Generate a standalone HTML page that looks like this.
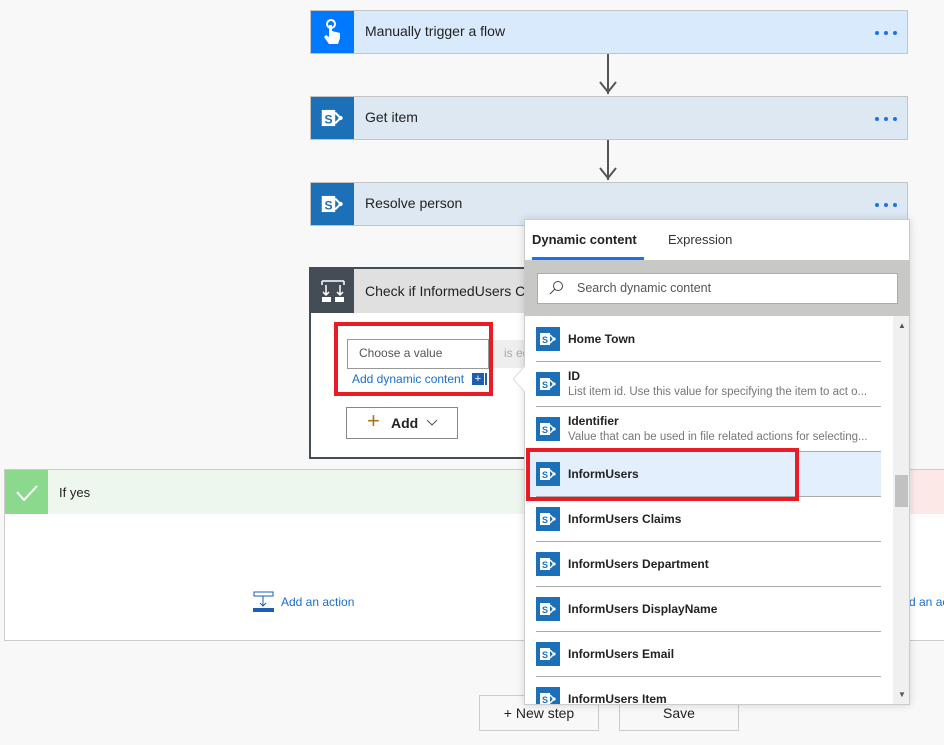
<!DOCTYPE html>
<html><head><style>
body{margin:0;width:944px;height:745px;background:#f8f8f8;font-family:"Segoe UI","Liberation Sans",sans-serif;position:relative;overflow:hidden;color:#222}
.a{position:absolute;white-space:nowrap}
.card{position:absolute;left:310px;width:596px;height:42px;border:1px solid #c4c4c4;font-size:14px}
.card .ic{position:absolute;left:0;top:0;width:43px;height:42px}
.card .t{position:absolute;left:54px;top:12px}
.dots{position:absolute;right:10px;top:20px;width:22px;height:4px}
.dots i{position:absolute;top:0;width:4px;height:4px;border-radius:2px;background:#1a73e8}
.arrow{position:absolute;left:607px;width:2px;background:#555}
.sp{position:absolute;left:536px;width:24px;height:24px;background:#1c70b8}
.row{position:absolute;left:568px;font-size:12px;font-weight:bold;color:#222;white-space:nowrap}
.desc{position:absolute;left:568px;font-size:11.5px;color:#777;white-space:nowrap}
.sep{position:absolute;left:536px;width:345px;height:1px;background:#aaa}
</style></head><body>
<svg width="0" height="0" style="position:absolute"><defs>
<g id="sp"><rect x="4" y="6" width="10" height="12" fill="#fff"/><text x="9" y="16" font-size="9" font-weight="bold" text-anchor="middle" fill="#1c70b8" font-family="Liberation Sans">S</text><path d="M14 8 L18 12 L14 16" stroke="#fff" stroke-width="1.5" fill="none"/><circle cx="18" cy="12" r="1.6" fill="#fff"/></g>
</defs></svg>

<div class="card" style="top:10px;background:#d9eafd"><div class="ic" style="background:#0078ff"><svg width="43" height="42"><circle cx="20" cy="13" r="4" stroke="#fff" stroke-width="2" fill="none"/><path d="M18 14 v12 l-3 -2 l-2 2 l5 7 h9 l2 -6 v-5 l-8 -2 v-6z" fill="#fff"/></svg></div><div class="t">Manually trigger a flow</div><div class="dots"><i style="left:0"></i><i style="left:9px"></i><i style="left:18px"></i></div></div>
<div class="arrow" style="top:54px;height:40px"></div><svg class="a" style="left:598px;top:80px" width="20" height="16"><path d="M2 2 L10 12 L18 2" stroke="#555" stroke-width="2" fill="none"/></svg>
<div class="card" style="top:96px;background:#dde8f3"><div class="ic" style="background:#1c70b8"><svg width="43" height="42" viewBox="-4 -3 32 30"><use href="#sp"/></svg></div><div class="t">Get item</div><div class="dots"><i style="left:0"></i><i style="left:9px"></i><i style="left:18px"></i></div></div>
<div class="arrow" style="top:140px;height:40px"></div><svg class="a" style="left:598px;top:166px" width="20" height="16"><path d="M2 2 L10 12 L18 2" stroke="#555" stroke-width="2" fill="none"/></svg>
<div class="card" style="top:182px;background:#dde8f3"><div class="ic" style="background:#1c70b8"><svg width="43" height="42" viewBox="-4 -3 32 30"><use href="#sp"/></svg></div><div class="t">Resolve person</div><div class="dots"><i style="left:0"></i><i style="left:9px"></i><i style="left:18px"></i></div></div>

<!-- condition -->
<div class="a" style="left:309px;top:267px;width:590px;height:188px;border:2px solid #444c56;background:#fff"></div>
<div class="a" style="left:311px;top:269px;width:43px;height:44px;background:#444c56"><svg width="43" height="44"><path d="M11 12h22M11 12v4M33 12v4M15 16v10M29 16v10M12 23l3 3 3-3M26 23l3 3 3-3" stroke="#fff" stroke-width="1.5" fill="none"/><rect x="11" y="28" width="9" height="5" fill="#fff"/><rect x="24" y="28" width="9" height="5" fill="#fff"/></svg></div>
<div class="a" style="left:354px;top:269px;width:546px;height:44px;background:#e0e0e0"></div>
<div class="a" style="left:365px;top:283px;font-size:14px">Check if InformedUsers Co</div>
<div class="a" style="left:347px;top:339px;width:140px;height:28px;border:1px solid #999;background:#fff;font-size:12px;color:#555"><span style="position:absolute;left:11px;top:6px">Choose a value</span></div>
<div class="a" style="left:489px;top:340px;width:40px;height:28px;background:#eee;font-size:12px;color:#aaa;overflow:hidden"><span style="position:absolute;left:15px;top:6px">is eq</span></div>
<div class="a" style="left:352px;top:372px;font-size:12px;color:#1a6ec8">Add dynamic content</div>
<div class="a" style="left:472px;top:373px;width:12px;height:12px;background:#1c5fb0;color:#fff;font-size:11px;line-height:12px;text-align:center">+</div>
<div class="a" style="left:485px;top:373px;width:2px;height:12px;background:#1c5fb0"></div>
<div class="a" style="left:334px;top:322px;width:151px;height:66px;border:4px solid #e81c24"></div>
<div class="a" style="left:346px;top:407px;width:110px;height:30px;border:1px solid #888;background:#fff;font-size:14px;font-weight:bold"><span style="position:absolute;left:20px;top:0px;font-weight:normal;font-size:22px;color:#b07020">+</span><span style="position:absolute;left:44px;top:7px">Add</span><svg class="a" style="left:79px;top:11px" width="12" height="8"><path d="M1 1l5 5 5-5" stroke="#555" fill="none"/></svg></div>

<!-- if yes -->
<div class="a" style="left:4px;top:469px;width:940px;height:170px;border:1px solid #ccc;background:#fff"></div>
<div class="a" style="left:5px;top:470px;width:43px;height:44px;background:#8ad98c"><svg width="43" height="44"><path d="M12 22l7 8 13-14" stroke="#fff" stroke-width="2" fill="none"/></svg></div>
<div class="a" style="left:48px;top:470px;width:880px;height:44px;background:#eef7ee"></div>
<div class="a" style="left:59px;top:485px;font-size:13px">If yes</div>
<div class="a" style="left:911px;top:470px;width:33px;height:44px;background:#fde8e8"></div>
<svg class="a" style="left:252px;top:591px" width="24" height="22"><rect x="2" y="1" width="19" height="4" fill="none" stroke="#1c5fb0"/><path d="M11 5v10M8 12l3 3 3-3" stroke="#1c5fb0" fill="none"/><rect x="1" y="17" width="21" height="4" fill="#1c5fb0"/></svg>
<div class="a" style="left:281px;top:595px;font-size:12px;color:#1a6ec8">Add an action</div>
<div class="a" style="left:909px;top:595px;font-size:12px;color:#1a6ec8">d an ac</div>

<div class="a" style="left:479px;top:695px;width:118px;height:34px;border:1px solid #ccc;background:#f8f8f8;font-size:14px;text-align:center;line-height:34px">+ New step</div>
<div class="a" style="left:619px;top:695px;width:118px;height:34px;border:1px solid #ccc;background:#f8f8f8;font-size:14px;text-align:center;line-height:34px">Save</div>

<!-- panel -->
<div class="a" style="left:524px;top:219px;width:386px;height:486px;background:#fff;border:1px solid #ccc;box-sizing:border-box;box-shadow:0 0 8px rgba(0,0,0,.15)"></div>
<svg class="a" style="left:512px;top:366px" width="14" height="26"><path d="M13 0 L1 13 L13 26" fill="#fff" stroke="#ddd"/></svg>
<div class="a" style="left:532px;top:232px;font-size:13px;color:#222;font-weight:600">Dynamic content</div>
<div class="a" style="left:532px;top:257px;width:112px;height:3px;background:#1a73e8"></div>
<div class="a" style="left:668px;top:232px;font-size:13px;color:#333">Expression</div>
<div class="a" style="left:524px;top:260px;width:386px;height:56px;background:#c8c8c6"></div>
<div class="a" style="left:537px;top:273px;width:359px;height:29px;background:#fff;border:1px solid #aaa;font-size:12.5px;color:#555"><svg class="a" style="left:10px;top:6px" width="16" height="16"><circle cx="10" cy="6" r="4.5" stroke="#444" fill="none"/><path d="M7 9L2 14" stroke="#444"/></svg><span style="position:absolute;left:39px;top:7px">Search dynamic content</span></div>
<div class="a" style="left:893px;top:316px;width:16px;height:388px;background:#f0f0f0"></div>
<div class="a" style="left:895px;top:475px;width:13px;height:32px;background:#c1c1c1"></div>
<div class="a" style="left:898px;top:321px;font-size:8px;color:#555">▲</div>
<div class="a" style="left:898px;top:690px;font-size:8px;color:#555">▼</div>
<div class="a" style="left:526px;top:452px;width:355px;height:44px;background:#e3effd"></div>
<div class="sep" style="top:361px"></div><div class="sep" style="top:406px"></div><div class="sep" style="top:451px"></div><div class="sep" style="top:496px"></div><div class="sep" style="top:541px"></div><div class="sep" style="top:586px"></div><div class="sep" style="top:631px"></div><div class="sep" style="top:676px"></div>
<svg class="sp" style="top:327px" viewBox="0 0 24 24"><use href="#sp"/></svg><div class="row" style="top:332px">Home Town</div>
<svg class="sp" style="top:372px" viewBox="0 0 24 24"><use href="#sp"/></svg><div class="row" style="top:369px">ID</div><div class="desc" style="top:386px">List item id. Use this value for specifying the item to act o...</div>
<svg class="sp" style="top:417px" viewBox="0 0 24 24"><use href="#sp"/></svg><div class="row" style="top:414px">Identifier</div><div class="desc" style="top:431px">Value that can be used in file related actions for selecting...</div>
<svg class="sp" style="top:462px" viewBox="0 0 24 24"><use href="#sp"/></svg><div class="row" style="top:467px">InformUsers</div>
<svg class="sp" style="top:507px" viewBox="0 0 24 24"><use href="#sp"/></svg><div class="row" style="top:512px">InformUsers Claims</div>
<svg class="sp" style="top:552px" viewBox="0 0 24 24"><use href="#sp"/></svg><div class="row" style="top:557px">InformUsers Department</div>
<svg class="sp" style="top:597px" viewBox="0 0 24 24"><use href="#sp"/></svg><div class="row" style="top:602px">InformUsers DisplayName</div>
<svg class="sp" style="top:642px" viewBox="0 0 24 24"><use href="#sp"/></svg><div class="row" style="top:647px">InformUsers Email</div>
<div class="a" style="left:525px;top:686px;width:368px;height:18px;overflow:hidden"><svg class="sp" style="left:11px;top:1px" viewBox="0 0 24 24"><use href="#sp"/></svg><div class="row" style="left:43px;top:6px">InformUsers Item</div></div>
<div class="a" style="left:526px;top:448px;width:265px;height:45px;border:4px solid #e81c24"></div>
</body></html>
